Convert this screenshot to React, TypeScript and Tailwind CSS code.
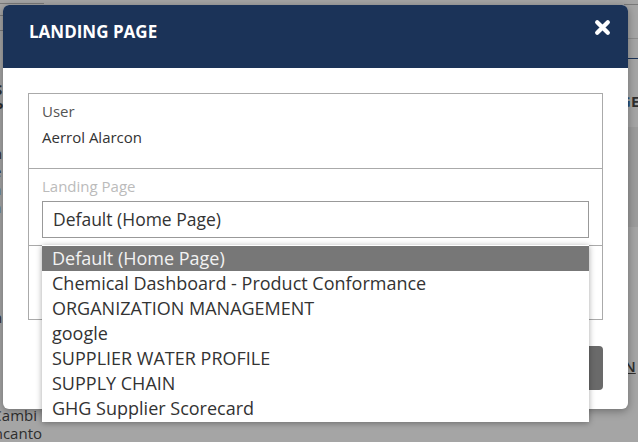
import React from 'react';

const pages = [
  'Default (Home Page)',
  'Chemical Dashboard - Product Conformance',
  'ORGANIZATION MANAGEMENT',
  'google',
  'SUPPLIER WATER PROFILE',
  'SUPPLY CHAIN',
  'GHG Supplier Scorecard',
];

function CloseIcon() {
  return (
    <svg width="17" height="17" viewBox="0 0 16 16" fill="none">
      <path d="M3 3 L13 13 M13 3 L3 13" stroke="white" strokeWidth="4" strokeLinecap="round" />
    </svg>
  );
}

function Backdrop() {
  return (
    <div className="flex h-full w-full justify-between text-[#2e2e2e]">
      {/* left column of the page behind */}
      <div className="flex w-[44px] flex-col items-end overflow-hidden text-[15px] leading-[18px]">
        <div className="mt-[3px] h-px w-full bg-[#7a7a7a]" />
        <div className="mt-[12px] h-px w-full bg-[#7a7a7a]" />
        <div className="mt-[14px] h-px w-full bg-[#7a7a7a]" />
        <div className="mt-[50px] self-start -ml-[6px] font-bold">S</div>
        <div className="self-start -ml-[6px] font-bold">P</div>
        <div className="mt-[28px] self-start -ml-[7px]">n</div>
        <div className="self-start -ml-[7px]">e</div>
        <div className="self-start -ml-[7px]">a</div>
        <div className="self-start -ml-[7px]">a</div>
        <div className="mt-[92px] self-start -ml-[7px]">n</div>
        <div className="mt-[42px] self-start -ml-[7px]">l</div>
        <div className="mt-[20px] whitespace-nowrap pr-[7px]">Cambi</div>
        <div className="whitespace-nowrap pr-[2px]">Encanto</div>
      </div>
      {/* right column of the page behind */}
      <div className="flex w-[14px] flex-col overflow-hidden text-[15px]">
        <div className="mt-[4px] h-px w-full bg-[#7a7a7a]" />
        <div className="mt-[33px] h-px w-full bg-[#8c8c8c]" />
        <div className="mt-[19px] h-px w-full bg-[#1b3358]" />
        <div className="mt-[31px] -ml-[4px] whitespace-nowrap font-bold">
          <span className="text-[#2a4f7a]">G</span>E
        </div>
        <div className="mt-[14px] h-[100px] w-full bg-[#9c9c9c]" />
        <div className="mt-[128px] whitespace-nowrap font-semibold underline">N</div>
      </div>
    </div>
  );
}

export default function App() {
  return (
    <div
      className="relative h-[442px] w-[638px] overflow-hidden bg-[#a5a5a5]"
      style={{ fontFamily: '"Open Sans", "Liberation Sans", sans-serif' }}
    >
      <Backdrop />

      {/* Modal */}
      <div className="absolute left-[3px] top-[5px] w-[625px] rounded-[6px] bg-white shadow-[0_2px_8px_rgba(0,0,0,0.35)]">
        <div className="flex h-[63px] items-start justify-between rounded-t-[6px] bg-[#1b3358] pl-[26px] pr-[17px] pt-[15px]">
          <h2 className="text-[17px] font-bold leading-[24px] text-white">LANDING PAGE</h2>
          <button className="mt-[-1px]">
            <CloseIcon />
          </button>
        </div>

        <div className="px-[25px] pb-[19px] pt-[25px]">
          <div className="border border-[#aaaaaa]">
            {/* User */}
            <div className="h-[74px] px-[13px] pt-[7px] text-[15px] leading-[20px]">
              <div className="text-[#555555]">User</div>
              <div className="mt-[6px] text-[#333333]">Aerrol Alarcon</div>
            </div>

            {/* Landing page */}
            <div className="h-[77px] border-t border-[#aaaaaa] px-[13px] pt-[7px]">
              <div className="text-[15px] leading-[20px] text-[#bbbbbb]">Landing Page</div>
              <div className="relative mt-[5px]">
                <div className="flex h-[37px] items-center border border-[#999999] px-[10px] text-[17.5px] text-[#333333]">
                  Default (Home Page)
                </div>
                <ul className="absolute left-0 top-[44px] z-10 w-full bg-white py-[1px] shadow-[0_1px_6px_rgba(0,0,0,0.35)]">
                  {pages.map((p, i) => (
                    <li
                      key={p}
                      className={
                        i === 0
                          ? 'h-[25px] bg-[#777777] px-[10px] text-[18px] leading-[24px] text-[#f2f2f2]'
                          : 'h-[25px] px-[10px] text-[18px] leading-[24px] text-[#333333]'
                      }
                    >
                      {p}
                    </li>
                  ))}
                </ul>
              </div>
            </div>

            {/* Empty row */}
            <div className="h-[74px] border-t border-[#aaaaaa]" />
          </div>

          <div className="mt-[26px] flex justify-end">
            <button className="h-[44px] w-[120px] rounded-[4px] bg-[#6a6a6a] text-[14px] font-semibold text-white">
              SAVE
            </button>
          </div>
        </div>
      </div>
    </div>
  );
}
